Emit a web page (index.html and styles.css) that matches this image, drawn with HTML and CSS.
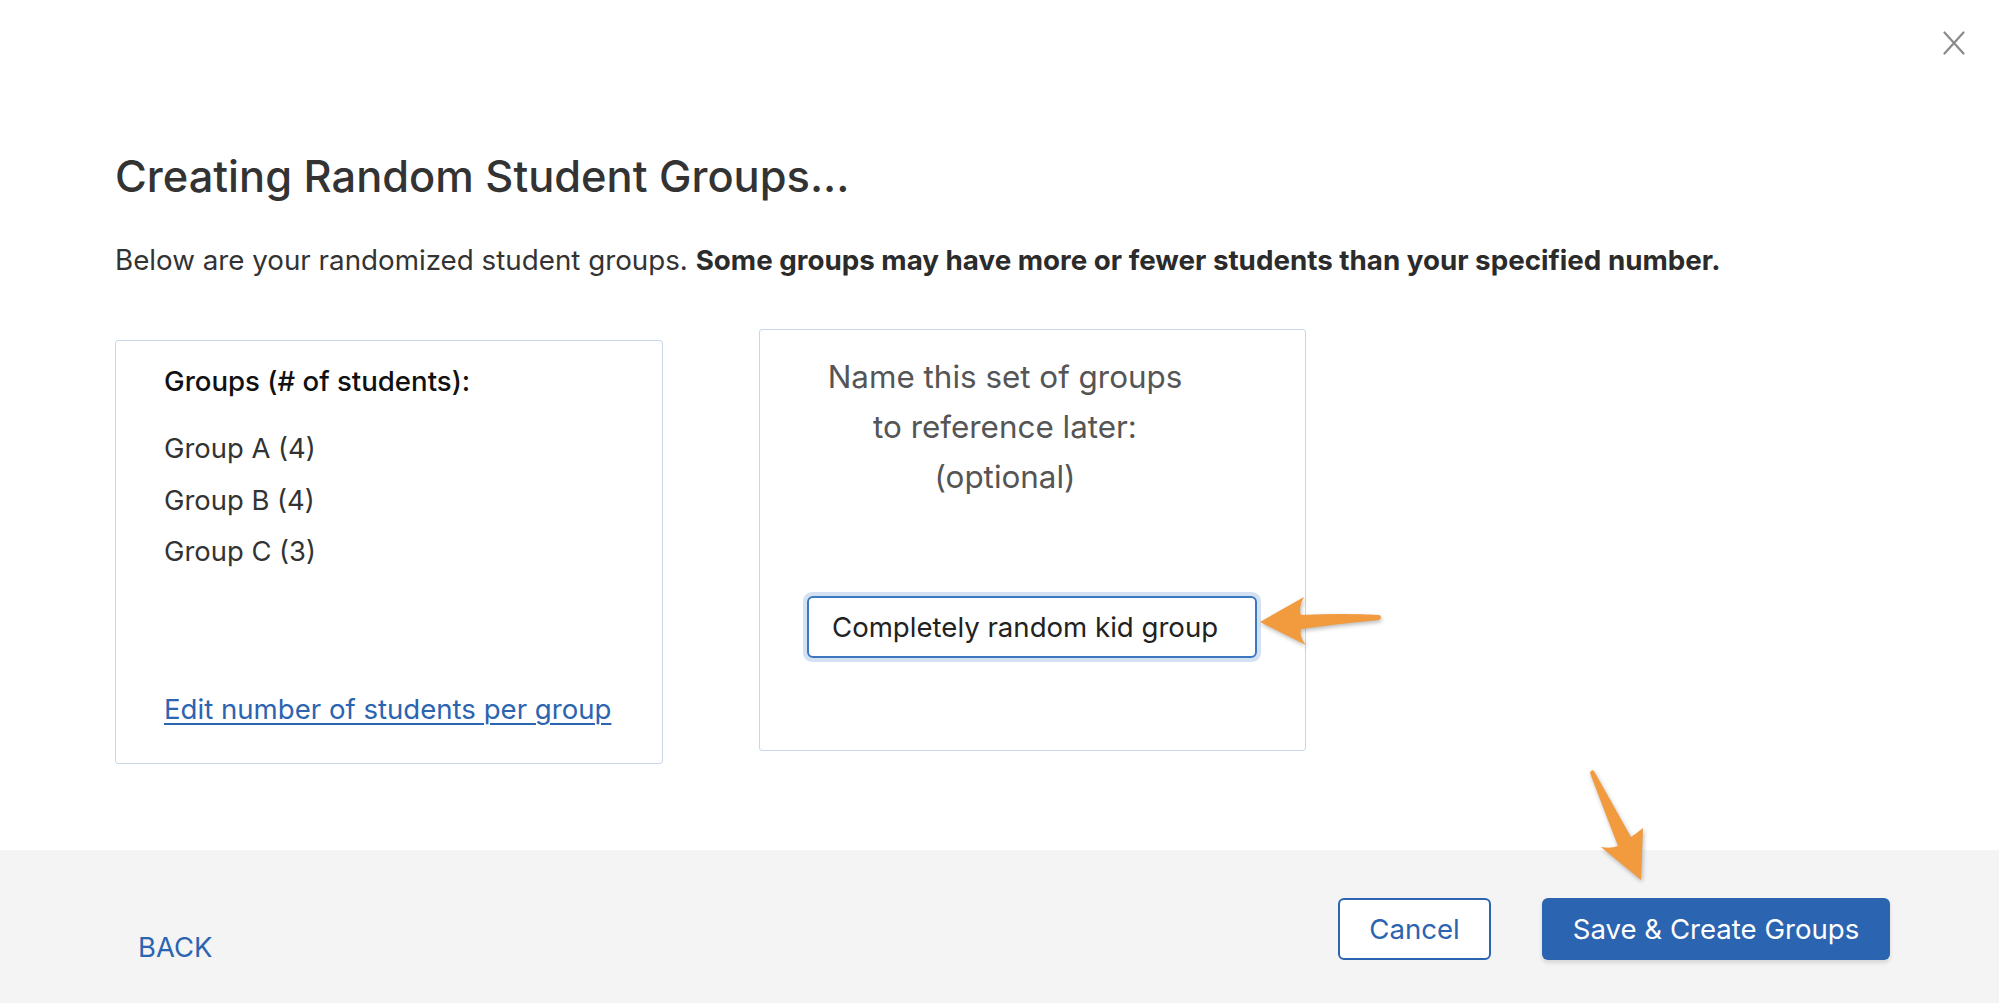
FILE: index.html
```html
<!DOCTYPE html>
<html lang="en">
<head>
<meta charset="utf-8">
<title>Creating Random Student Groups</title>
<link rel="stylesheet" href="styles.css">
</head>
<body>
<div class="modal">
  <div class="modal-body">
    <div class="close-row">
      <button class="close-btn" aria-label="Close">
        <svg width="22" height="24" viewBox="0 0 22 24"><path d="M1.5 1.5 L20.5 22.5 M20.5 1.5 L1.5 22.5" stroke="#8a8a8a" stroke-width="2.2" fill="none" stroke-linecap="round"/></svg>
      </button>
    </div>
    <h1 class="title">Creating Random Student Groups...</h1>
    <p class="subtitle">Below are your randomized student groups. <strong>Some groups may have more or fewer students than your specified number.</strong></p>
    <div class="cards">
      <div class="card card-groups">
        <div class="groups-heading">Groups (# of students):</div>
        <ul class="group-list">
          <li>Group A (4)</li>
          <li>Group B (4)</li>
          <li>Group C (3)</li>
        </ul>
        <a class="edit-link" href="#">Edit number of students per group</a>
      </div>
      <div class="card card-name">
        <div class="name-label">Name this set of groups<br>to reference later:<br>(optional)</div>
        <div class="input-ring"><input class="name-input" type="text" value="Completely random kid group"></div>
      </div>
    </div>
  </div>
  <div class="modal-footer">
    <a class="back-link" href="#">BACK</a>
    <div class="actions">
      <button class="btn btn-outline">Cancel</button>
      <button class="btn btn-primary">Save &amp; Create Groups</button>
    </div>
  </div>

  <svg class="annot annot-left" width="140" height="60" viewBox="0 0 140 60">
    <path d="M5 30 L49 5 Q43 16 46 23 Q90 21 124 23 Q128 25 124 28 Q90 31 46 37 Q44 45 51 53 Z" fill="#f19a3e"/>
  </svg>
  <svg class="annot annot-down" width="80" height="130" viewBox="0 0 80 130">
    <path d="M61 120 L21 87 Q31 89 38 86 Q24 50 10 13 Q11 9 14 11 Q33 45 51 77 Q57 73 63 68 Z" fill="#f19a3e"/>
  </svg>
</div>
</body>
</html>
```

FILE: styles.css
```css
* { box-sizing: border-box; }

html, body {
  margin: 0;
  padding: 0;
  background: #ffffff;
}

body {
  font-family: "Inter", "Noto Sans", "Liberation Sans", sans-serif;
  color: #333333;
  width: 1999px;
  height: 1003px;
  overflow: hidden;
}

.modal {
  position: relative;
  width: 1999px;
  height: 1003px;
  display: flex;
  flex-direction: column;
}

.modal-body {
  height: 850px;
  padding-left: 115px;
  background: #ffffff;
}

.close-row {
  display: flex;
  justify-content: flex-end;
  padding-top: 31px;
  padding-right: 34px;
}

.close-btn {
  border: 0;
  background: transparent;
  padding: 0;
  width: 22px;
  height: 24px;
  display: block;
}

.close-btn svg { display: block; }

.title {
  margin: 96px 0 0 0;
  font-size: 43.4px;
  line-height: 50px;
  font-weight: 500;
  color: #333333;
}

.subtitle {
  margin: 43px 0 0 0;
  font-size: 27.75px;
  line-height: 32px;
  color: #333333;
}

.subtitle strong {
  font-weight: 700;
  color: #2b2b2b;
}

.cards {
  display: flex;
  align-items: flex-start;
  gap: 96px;
  margin-top: 53px;
}

.card {
  border: 1px solid #c8d6ec;
  border-radius: 3px;
  background: #ffffff;
}

.card-groups {
  width: 548px;
  height: 424px;
  margin-top: 11px;
  padding: 25px 0 0 48px;
  display: flex;
  flex-direction: column;
}

.groups-heading {
  font-size: 27.6px;
  line-height: 30px;
  font-weight: 500;
  color: #111111;
}

.group-list {
  list-style: none;
  margin: 27px 0 0 0;
  padding: 0;
}

.group-list li {
  font-size: 27.4px;
  line-height: 51.5px;
  color: #333333;
}

.edit-link {
  margin-top: auto;
  margin-bottom: 39px;
  font-size: 27.6px;
  line-height: 30px;
  color: #2b64b0;
  text-decoration: underline;
  text-underline-offset: 4px;
  text-decoration-thickness: 2px;
  align-self: flex-start;
}

.card-name {
  width: 547px;
  height: 422px;
  padding: 22px 0 0 47px;
}

.name-label {
  width: 396px;
  text-align: center;
  font-size: 31.4px;
  line-height: 50px;
  color: #555555;
}

.input-ring {
  margin-top: 90px;
  margin-left: -4px;
  width: 458px;
  padding: 4px;
  border-radius: 9px;
  background: #d3e1f3;
}

.name-input {
  display: block;
  width: 450px;
  height: 62px;
  border: 2px solid #3c78c0;
  border-radius: 6px;
  padding: 0 0 0 23px;
  font-family: inherit;
  font-size: 27.6px;
  color: #222222;
  background: #ffffff;
  outline: none;
}

.modal-footer {
  flex: 1;
  background: #f4f4f4;
  display: flex;
  justify-content: space-between;
  align-items: flex-start;
  padding: 0 109px 0 138px;
}

.back-link {
  margin-top: 82px;
  font-size: 27.4px;
  line-height: 30px;
  color: #2b64b0;
  text-decoration: none;
}

.actions {
  display: flex;
  gap: 51px;
  padding-top: 48px;
}

.btn {
  height: 62px;
  border-radius: 6px;
  font-family: inherit;
  font-size: 27.6px;
  cursor: pointer;
}

.btn-outline {
  width: 153px;
  border: 2px solid #2b64b0;
  background: #ffffff;
  color: #2b64b0;
}

.btn-primary {
  width: 348px;
  border: 0;
  background: #2b64b0;
  color: #ffffff;
  box-shadow: 0 3px 4px rgba(0, 0, 0, 0.12);
}

.annot {
  position: absolute;
  filter: drop-shadow(1px 2px 2px rgba(0, 0, 0, 0.28));
}

.annot-left {
  left: 1255px;
  top: 592px;
}

.annot-down {
  left: 1580px;
  top: 760px;
}
```
